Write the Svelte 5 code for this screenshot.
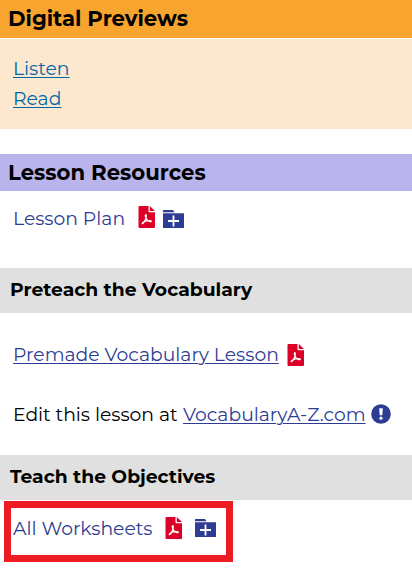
<script lang="ts">
    const previews = ['Listen', 'Read']
</script>

{#snippet pdfIcon()}
    <svg class="pdf" viewBox="0 0 17 22" aria-hidden="true">
        <path
            fill="#dc0028"
            d="M1.5 0H10.5v5.2a1 1 0 0 0 1 1H17V21a1 1 0 0 1-1 1h-14.500a1 1 0 0 1-1-1V1a1 1 0 0 1 1-1zM11.8 0l5.200 5H11.800z"
        />
        <path
            fill="none"
            stroke="#fff"
            stroke-width="1.2"
            stroke-linecap="round"
            stroke-linejoin="round"
            d="M7.6 8.600c1.100 0 .8 2.600.1 4.200-.7 1.900-2.200 4.600-3.300 4.900-.8-.7 1.600-2.400 4.200-2.900 2-.4 4.600-.5 4.700.4 0 .9-2.400.4-3.800-.9-1.600-1.400-2.900-4.800-1.900-5.700z"
        />
    </svg>
{/snippet}

{#snippet folderIcon()}
    <svg class="folder" viewBox="0 0 21 18" aria-hidden="true">
        <path fill="#2e3d94" d="M.5 0h9.500l1.600 2.200H0V.5a.5.5 0 0 1 .5-.5zM0 3.200h20.500a.5.5 0 0 1 .5.5V17.500a.5.5 0 0 1-.5.5H.5a.5.5 0 0 1-.5-.5z" />
        <path stroke="#fff" stroke-width="1.800" d="M5 11h11M10.5 5.5v11" />
    </svg>
{/snippet}

<main>
    <h2 class="previews-title">Digital Previews</h2>
    <ul class="previews">
        {#each previews as preview (preview)}
            <li><a href="#top">{preview}</a></li>
        {/each}
    </ul>

    <h2 class="resources-title">Lesson Resources</h2>
    <div class="row lesson-plan">
        <span class="label">Lesson Plan</span>
        {@render pdfIcon()}
        {@render folderIcon()}
    </div>

    <h3>Preteach the Vocabulary</h3>
    <div class="row premade">
        <a href="#top">Premade Vocabulary Lesson</a>
        {@render pdfIcon()}
    </div>
    <div class="row edit">
        <span class="text">Edit this lesson at</span>
        <a href="#top">VocabularyA-Z.com</a>
        <svg class="info" viewBox="0 0 20 20" aria-hidden="true">
            <circle cx="10" cy="10" r="9.8" fill="#2e3d94" />
            <path fill="#fff" d="M8.2 4.3h3.6l-.5 7H8.7z" />
            <circle cx="10" cy="14.2" r="1.6" fill="#fff" />
        </svg>
    </div>

    <h3>Teach the Objectives</h3>
    <div class="row worksheets">
        <span class="label">All Worksheets</span>
        {@render pdfIcon()}
        {@render folderIcon()}
    </div>
</main>

<style>
    :global(body) {
        margin: 0;
        background: #fff;
    }

    main {
        width: 412px;
        height: 569px;
        overflow: hidden;
        font-family: Montserrat, Inter, sans-serif;
        font-size: 18.75px;
        font-weight: 400;
        color: #000;
    }

    h2,
    h3 {
        box-sizing: border-box;
        margin: 0;
        display: flex;
        align-items: center;
        white-space: nowrap;
    }

    h2 {
        padding: 0 0 2px 8px;
        font-size: 21.2px;
        font-weight: 700;
    }

    h3 {
        height: 45px;
        padding: 0 0 2px 10px;
        background: #e0e0e0;
        font-size: 18.75px;
        font-weight: 700;
    }

    .previews-title {
        height: 38px;
        background: #f8a530;
    }

    .previews {
        box-sizing: border-box;
        height: 90px;
        margin: 1px 0 25px;
        padding: 15px 0 0 13px;
        background: #fce8ce;
        list-style: none;
        line-height: 30px;
    }

    a {
        color: #2e3d94;
        text-decoration: underline;
        text-decoration-thickness: 1px;
        text-underline-offset: 2px;
    }

    .previews a {
        color: #0067ac;
    }

    .resources-title {
        height: 37px;
        background: #b9b4ec;
    }

    .row {
        display: flex;
        align-items: center;
        padding-left: 13px;
        white-space: nowrap;
    }

    .row svg {
        flex: none;
    }

    .label {
        color: #2e3d94;
    }

    .pdf {
        width: 17px;
        height: 22px;
    }

    .folder {
        width: 21px;
        height: 18px;
    }

    .lesson-plan {
        height: 52px;
        margin-bottom: 25px;
    }

    .lesson-plan .label {
        width: 125px;
        padding-top: 2px;
    }

    .lesson-plan .folder {
        margin: 3px 0 0 8px;
    }

    .premade {
        height: 84px;
    }

    .premade a {
        margin-right: 8px;
        padding-bottom: 2px;
    }

    .edit {
        height: 35px;
        padding-bottom: 23px;
    }

    .text {
        width: 170px;
    }

    .info {
        width: 20px;
        height: 20px;
        margin: -2px 0 0 5px;
    }

    .worksheets {
        box-sizing: border-box;
        width: 229px;
        height: 61px;
        margin: 1px 0 0 4px;
        padding: 0 0 6px 2px;
        border: 7px solid #ed1c24;
    }

    .worksheets .label {
        width: 152px;
    }

    .worksheets .pdf {
        margin-top: -2px;
    }

    .worksheets .folder {
        margin: -1px 0 0 13px;
    }
</style>
